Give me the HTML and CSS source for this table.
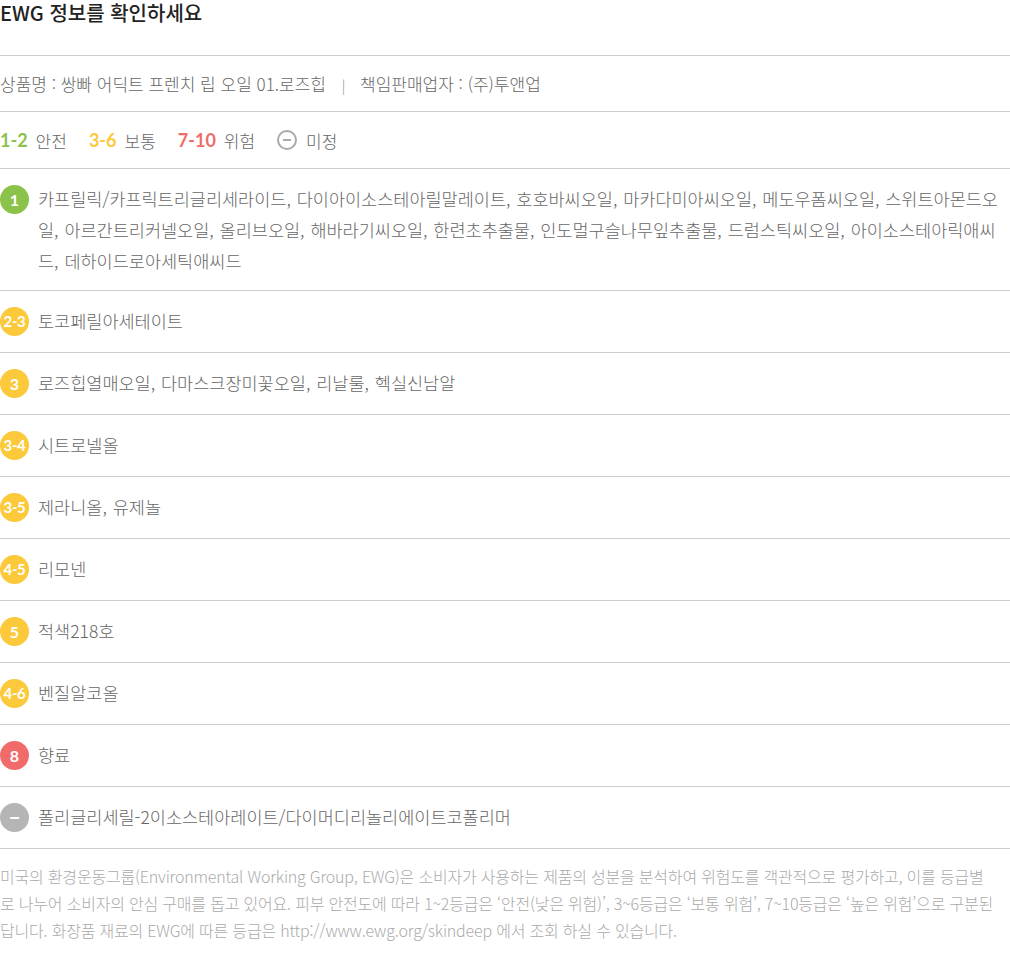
FILE: index.html
```html
<!DOCTYPE html>
<html lang="ko">
<head>
    <meta charset="UTF-8">
    <title>EWG 정보</title>
    <link rel="stylesheet" href="styles.css">
</head>
<body>
    <div class="ewg">
        <h2 class="ewg-title">EWG 정보를 확인하세요</h2>

        <div class="product">
            상품명 : 쌍빠 어딕트 프렌치 립 오일 01.로즈힙
            <span class="sep">|</span>
            책임판매업자 : (주)투앤업
        </div>

        <div class="legend">
            <span class="lg"><b class="green">1-2</b> 안전</span>
            <span class="lg"><b class="yellow">3-6</b> 보통</span>
            <span class="lg"><b class="red">7-10</b> 위험</span>
            <span class="lg"><i class="none-icon"></i> 미정</span>
        </div>

        <ul class="grades">
            <li>
                <span class="badge bg-green">1</span>
                <p>카프릴릭/카프릭트리글리세라이드, 다이아이소스테아릴말레이트, 호호바씨오일, 마카다미아씨오일, 메도우폼씨오일, 스위트아몬드오일, 아르간트리커넬오일, 올리브오일, 해바라기씨오일, 한련초추출물, 인도멀구슬나무잎추출물, 드럼스틱씨오일, 아이소스테아릭애씨드, 데하이드로아세틱애씨드</p>
            </li>
            <li>
                <span class="badge bg-yellow small">2-3</span>
                <p>토코페릴아세테이트</p>
            </li>
            <li>
                <span class="badge bg-yellow">3</span>
                <p>로즈힙열매오일, 다마스크장미꽃오일, 리날룰, 헥실신남알</p>
            </li>
            <li>
                <span class="badge bg-yellow small">3-4</span>
                <p>시트로넬올</p>
            </li>
            <li>
                <span class="badge bg-yellow small">3-5</span>
                <p>제라니올, 유제놀</p>
            </li>
            <li>
                <span class="badge bg-yellow small">4-5</span>
                <p>리모넨</p>
            </li>
            <li>
                <span class="badge bg-yellow">5</span>
                <p>적색218호</p>
            </li>
            <li>
                <span class="badge bg-yellow small">4-6</span>
                <p>벤질알코올</p>
            </li>
            <li>
                <span class="badge bg-red">8</span>
                <p>향료</p>
            </li>
            <li>
                <span class="badge bg-gray">&minus;</span>
                <p>폴리글리세릴-2이소스테아레이트/다이머디리놀리에이트코폴리머</p>
            </li>
        </ul>

        <p class="notice">미국의 환경운동그룹(Environmental Working Group, EWG)은 소비자가 사용하는 제품의 성분을 분석하여 위험도를 객관적으로 평가하고, 이를 등급별로 나누어 소비자의 안심 구매를 돕고 있어요. 피부 안전도에 따라 1~2등급은 ‘안전(낮은 위험)’, 3~6등급은 ‘보통 위험’, 7~10등급은 ‘높은 위험’으로 구분된답니다. 화장품 재료의 EWG에 따른 등급은 http://www.ewg.org/skindeep 에서 조회 하실 수 있습니다.</p>
    </div>
</body>
</html>
```

FILE: styles.css
```css
body { margin: 0; background: #fff; font-family: "Noto Sans CJK KR", "Noto Sans", sans-serif; font-weight: 300; color: #666; }
.ewg { width: 1010px; }
.ewg-title { margin: 0; height: 55px; font-size: 20px; font-weight: 500; color: #222; line-height: 26px; border-bottom: 1px solid #ccc; }

.product { height: 55px; line-height: 55px; font-size: 17px; border-bottom: 1px solid #ccc; }
.product .sep { margin: 0 10px 0 11px; color: #888; font-size: 14px; }

.legend { display: flex; align-items: center; height: 56px; font-size: 17px; border-bottom: 1px solid #ccc; }
.lg { display: flex; align-items: center; margin-right: 22px; }
.lg b { font-family: "Lato", "Noto Sans", sans-serif; font-weight: 700; font-size: 18px; margin-right: 8px; }
.green { color: #8bc34a; }
.yellow { color: #fcc93b; }
.red { color: #f26b6b; }
.none-icon { position: relative; width: 16px; height: 16px; border: 2px solid #aaa; border-radius: 50%; margin-right: 9px; }
.none-icon::after { content: ""; position: absolute; left: 4px; right: 4px; top: 7px; height: 2px; background: #aaa; }

.grades { list-style: none; margin: 0; padding: 0; }
.grades li { display: flex; align-items: flex-start; padding: 15px 0; border-bottom: 1px solid #ccc; }
.grades p { margin: -1px 0; flex: 1; font-size: 17.5px; line-height: 31px; word-spacing: 1px; }
.badge { flex: none; width: 29px; height: 29px; margin: 1px 9px 1px 0; border-radius: 50%; color: #fff; text-align: center; line-height: 29px; font-family: "Lato", "Noto Sans", sans-serif; font-weight: 700; font-size: 16px; }
.badge.small { font-size: 15px; letter-spacing: -0.4px; }
.bg-green { background: #8bc34a; }
.bg-yellow { background: #fcc93b; }
.bg-red { background: #f26b6b; }
.bg-gray { background: #b5b5b5; font-size: 20px; }

.notice { width: 996px; margin: 0; padding-top: 14px; font-size: 16px; line-height: 27px; letter-spacing: -0.2px; color: #aaa; }
```
